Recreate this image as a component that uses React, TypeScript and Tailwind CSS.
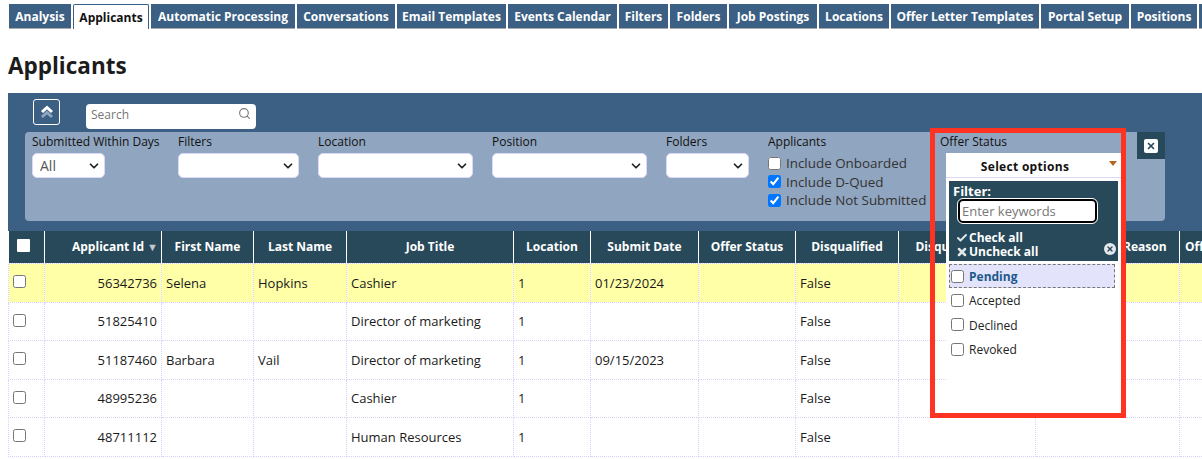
import { ChevronDown, Search, Check, X } from "lucide-react";

const tabs: [string, number][] = [
  ["Analysis", 62],
  ["Applicants", 76],
  ["Automatic Processing", 144],
  ["Conversations", 98],
  ["Email Templates", 109],
  ["Events Calendar", 109],
  ["Filters", 49],
  ["Folders", 57],
  ["Job Postings", 88],
  ["Locations", 70],
  ["Offer Letter Templates", 148],
  ["Portal Setup", 88],
  ["Positions", 66],
  ["Questions", 90],
];

const rows = [
  { id: "56342736", first: "Selena", last: "Hopkins", job: "Cashier", date: "01/23/2024", h: "h-[39px]", hl: true },
  { id: "51825410", first: "", last: "", job: "Director of marketing", date: "", h: "h-[38px]", hl: false },
  { id: "51187460", first: "Barbara", last: "Vail", job: "Director of marketing", date: "09/15/2023", h: "h-[39px]", hl: false },
  { id: "48995236", first: "", last: "", job: "Cashier", date: "", h: "h-[38px]", hl: false },
  { id: "48711112", first: "", last: "", job: "Human Resources", date: "", h: "h-[39px]", hl: false },
];

const td = "border border-dotted border-[#d6d2fa] pl-[4px] pr-[4px] pt-[2px] text-[13px] text-[#1a1a1a] whitespace-nowrap overflow-hidden";
const th = "border-x border-white text-[12px] font-bold text-white whitespace-nowrap overflow-hidden";

function Sel({ w, value }: { w: string; value?: string }) {
  return (
    <div className={`relative h-[25px] ${w}`}>
      <select className="h-full w-full appearance-none rounded-[5px] border border-[#dcd8fa] bg-white pl-[7px] text-[14px] text-[#555]">
        <option>{value ?? ""}</option>
      </select>
      <ChevronDown size={14} strokeWidth={3} className="pointer-events-none absolute right-[4px] top-[6px] text-[#222]" />
    </div>
  );
}

function Field({ label, w, value, col }: { label: string; w: string; value?: string; col?: string }) {
  return (
    <div className={`flex flex-col ${col ?? ""}`}>
      <label className="h-[20px] text-[12px] leading-[18px] text-[#111] whitespace-nowrap">{label}</label>
      <Sel w={w} value={value} />
    </div>
  );
}

export default function App() {
  return (
    <div className="relative h-[459px] w-[1202px] overflow-hidden bg-white font-['Open_Sans','Noto_Sans',sans-serif]">
      <nav className="flex h-[30px] w-[1300px] items-end gap-[2px] pl-[9px] pb-[1px]">
        {tabs.map(([t, w]) => {
          const active = t === "Applicants";
          return (
            <div
              key={t}
              style={{ width: w }}
              className={
                active
                  ? "flex h-[25px] items-center justify-center border border-b-0 border-[#3a6083] bg-white pt-[2px] text-[12px] font-bold text-[#111] rounded-t-[2px]"
                  : "flex h-[25px] items-center justify-center border-b border-[#a9a9a9] bg-[#3b6084] pt-[2px] text-[12px] font-bold text-white"
              }
            >
              <span className="whitespace-nowrap">{t}</span>
            </div>
          );
        })}
      </nav>

      <h1 className="ml-[8px] mt-[19px] h-[44px] text-[22.5px] font-bold leading-[33px] text-[#1c1c1c]">Applicants</h1>

      <section className="ml-[8px] h-[138px] bg-[#3b6084] pt-[6px]">
        <div className="flex h-[33px] items-start gap-[26px] pl-[25px]">
          <button className="flex h-[26px] w-[27px] items-center justify-center rounded-[3px] border border-white">
            <svg width="16" height="16" viewBox="0 0 16 16" fill="none" strokeWidth="3">
              <path d="M3 8 L8 3.5 L13 8" stroke="#ffffff" />
              <path d="M3 13 L8 8.5 L13 13" stroke="#8ea6bd" />
            </svg>
          </button>
          <div className="relative mt-[2px] h-[25px] w-[170px]">
            <input
              placeholder="Search"
              className="h-full w-full rounded-[4px] bg-white pb-[4px] pl-[5px] text-[12px] placeholder:text-[#767676]"
            />
            <Search size={13} className="absolute right-[5px] top-[6px] text-[#777]" />
          </div>
        </div>

        <div className="relative ml-[17px] h-[89px] w-[1140px] rounded-[4px] bg-[#90a5bf] pl-[7px] pt-[1px]">
          <div className="flex gap-[19px]">
            <Field label="Submitted Within Days" w="w-[73px]" value="All" col="w-[127px]" />
            <Field label="Filters" w="w-[121px]" />
            <Field label="Location" w="w-[155px]" />
            <Field label="Position" w="w-[155px]" />
            <Field label="Folders" w="w-[83px]" />
            <div className="flex w-[158px] flex-col">
              <label className="h-[21px] text-[12px] leading-[18px] text-[#111]">Applicants</label>
              {[
                ["Include Onboarded", false],
                ["Include D-Qued", true],
                ["Include Not Submitted", true],
              ].map(([l, c]) => (
                <label key={l as string} className="flex h-[18.5px] items-center gap-[5px] text-[13.4px] leading-[18px] text-[#333] whitespace-nowrap">
                  <input type="checkbox" defaultChecked={c as boolean} className="m-0 h-[13px] w-[13px]" />
                  {l}
                </label>
              ))}
            </div>
          </div>
          <div className="absolute right-0 top-0 flex h-[27px] w-[28px] items-center justify-center bg-[#27495a]">
            <span className="flex h-[14px] w-[14px] items-center justify-center rounded-[2px] bg-white">
              <X size={10} strokeWidth={4} className="text-[#27495a]" />
            </span>
          </div>
        </div>
      </section>

      <table className="ml-[8px] w-[1245px] table-fixed border-collapse">
        <colgroup>
          <col className="w-[36px]" />
          <col className="w-[117px]" />
          <col className="w-[92px]" />
          <col className="w-[93px]" />
          <col className="w-[167px]" />
          <col className="w-[77px]" />
          <col className="w-[108px]" />
          <col className="w-[97px]" />
          <col className="w-[103px]" />
          <col className="w-[137px]" />
          <col className="w-[144px]" />
          <col className="w-[74px]" />
        </colgroup>
        <thead>
          <tr className="h-[32px] bg-[#27495a]">
            <th className={th}>
              <input type="checkbox" className="m-0 block h-[13px] w-[13px] translate-x-[8px] -translate-y-[1px] appearance-none rounded-[1px] bg-white" />
            </th>
            <th className={`${th} pr-[3px] text-right`}>
              Applicant Id <span className="text-[11px] text-[#c4c8cc]">▼</span>
            </th>
            {["First Name", "Last Name", "Job Title", "Location", "Submit Date", "Offer Status", "Disqualified", "Disqualified Date", "Disqualified Reason", "Offer Date"].map((h) => (
              <th key={h} className={th}>{h}</th>
            ))}
          </tr>
        </thead>
        <tbody>
          {rows.map((r) => (
            <tr key={r.id} className={`${r.h} ${r.hl ? "bg-[#ffffa8]" : "bg-white"}`}>
              <td className={td}>
                <input type="checkbox" className="m-0 block h-[13px] w-[13px] -translate-y-[2px]" />
              </td>
              <td className={`${td} text-right`}>{r.id}</td>
              <td className={td}>{r.first}</td>
              <td className={td}>{r.last}</td>
              <td className={td}>{r.job}</td>
              <td className={td}>1</td>
              <td className={td}>{r.date}</td>
              <td className={td}></td>
              <td className={td}>False</td>
              <td className={td}></td>
              <td className={td}></td>
              <td className={td}></td>
            </tr>
          ))}
        </tbody>
      </table>

      {/* Offer Status multiselect, lying over the panel and table */}
      <div className="absolute left-[940px] top-[133px] text-[12px] leading-[18px] text-[#111]">Offer Status</div>
      <div className="absolute left-[946px] top-[153px] flex h-[265px] w-[175px] flex-col bg-white">
        <div className="relative flex h-[25px] shrink-0 items-center justify-center border-b border-[#dcd8fa] pr-[17px] pt-[3px] text-[12px] font-bold tracking-[0.3px] text-[#111]">
          Select options
          <span className="absolute right-[4px] top-[8px] h-0 w-0 border-x-[4px] border-t-[5px] border-x-transparent border-t-[#b8651b]" />
        </div>
        <div className="relative mx-[3px] mt-[3px] h-[80px] shrink-0 bg-[#27495a] px-[4px] pt-[2px]">
          <div className="text-[13px] font-bold leading-[16px] text-white">Filter:</div>
          <input
            placeholder="Enter keywords"
            className="ml-[5px] block h-[24px] w-[139px] rounded-[5px] border-2 border-black bg-white pl-[2px] text-[13px] outline outline-1 outline-white placeholder:text-[#777]"
          />
          <div className="mt-[8px] flex items-center gap-[1px] pl-[3px] text-[12px] font-bold leading-[14px] text-white">
            <Check size={12} strokeWidth={4} className="text-[#dfe6ec]" /> Check all
          </div>
          <div className="flex items-center gap-[1px] pl-[3px] text-[12px] font-bold leading-[14px] text-white">
            <X size={12} strokeWidth={5} className="text-[#dfe6ec]" /> Uncheck all
          </div>
          <span className="absolute bottom-[6px] right-[2px] flex h-[12px] w-[12px] items-center justify-center rounded-full bg-[#e4e8ec]">
            <X size={8} strokeWidth={4} className="text-[#27495a]" />
          </span>
        </div>
        <div className="mx-[3px] mt-[3px] flex h-[24px] w-[166px] items-center gap-[5px] border border-dashed border-[#777] bg-[#e3e3fb] pl-[1px] text-[12px] font-bold text-[#1c5a8c]">
          <input type="checkbox" className="m-0 h-[13px] w-[13px]" /> <span className="pt-[2px]">Pending</span>
        </div>
        {["Accepted", "Declined", "Revoked"].map((o) => (
          <div key={o} className="ml-[5px] flex h-[24.5px] items-center gap-[5px] text-[12px] text-[#222]">
            <input type="checkbox" className="m-0 h-[13px] w-[13px]" /> <span className="pt-[2px]">{o}</span>
          </div>
        ))}
      </div>

      {/* Red annotation frame */}
      <div className="pointer-events-none absolute left-[930px] top-[128px] h-[290px] w-[196px] border-[5px] border-[#ff3322]" />
    </div>
  );
}
